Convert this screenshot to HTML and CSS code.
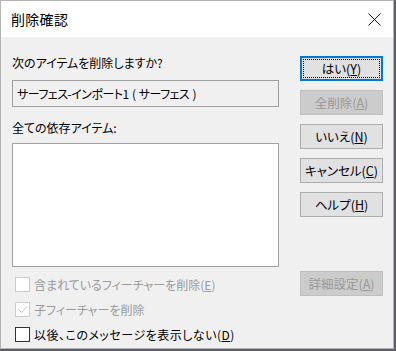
FILE: index.html
```html
<!DOCTYPE html>
<html lang="ja">
<head>
    <meta charset="UTF-8">
    <title>削除確認</title>
    <link rel="stylesheet" href="styles.css">
</head>
<body>
<div class="window">
    <div class="titlebar">
        <span class="title">削除確認</span>
        <svg class="close" width="13" height="13" viewBox="0 0 13 13">
            <path d="M0.5 0.5 L12.5 12.5 M12.5 0.5 L0.5 12.5" />
        </svg>
    </div>
    <div class="content">
        <div class="left">
            <div class="prompt">次のアイテムを削除しますか?</div>
            <div class="field">サーフェス-インポート1 ( サーフェス )</div>
            <div class="deps-label">全ての依存アイテム:</div>
            <div class="list"></div>
        </div>
        <div class="buttons">
            <button class="btn default">はい(<u>Y</u>)</button>
            <button class="btn" disabled>全削除(<u>A</u>)</button>
            <button class="btn">いいえ(<u>N</u>)</button>
            <button class="btn">キャンセル(<u>C</u>)</button>
            <button class="btn">ヘルプ(<u>H</u>)</button>
        </div>

        <label class="check disabled">
            <span class="box"></span>
            <span class="text">含まれているフィーチャーを削除(<u>E</u>)</span>
        </label>
        <div class="adv-cell">
            <button class="btn" disabled>詳細設定(<u>A</u>)</button>
        </div>

        <label class="check disabled">
            <span class="box">
                <svg width="13" height="13" viewBox="0 0 13 13">
                    <polyline points="2.5,6.5 5.5,9.5 11,3.5" />
                </svg>
            </span>
            <span class="text">子フィーチャーを削除</span>
        </label>
        <div></div>

        <label class="check">
            <span class="box"></span>
            <span class="text wide">以後、このメッセージを表示しない(<u>D</u>)</span>
        </label>
        <div></div>
    </div>
</div>
</body>
</html>
```

FILE: styles.css
```css
body {
    margin: 0;
    background: #5c5e6b;
    font-family: "Noto Sans CJK JP", sans-serif;
    font-size: 12px;
    font-feature-settings: "palt";
    color: #000;
}

.window {
    width: 392px;
    height: 347px;
    border: 1px solid #b4b4b4;
    background: #f0f0f0;
    display: flex;
    flex-direction: column;
}

.titlebar {
    height: 36px;
    background: #fff;
    display: flex;
    align-items: center;
    justify-content: space-between;
    padding: 0 12px 0 10px;
}

.title {
    font-size: 14px;
    line-height: 18px;
    letter-spacing: 0.3px;
}

.close path {
    stroke: #111;
    stroke-width: 1;
    fill: none;
}

.content {
    display: grid;
    grid-template-columns: 267px 83px;
    column-gap: 21px;
    padding: 18px 0 0 11px;
    align-items: start;
}

.left {
    display: flex;
    flex-direction: column;
}

.prompt,
.deps-label {
    line-height: 16px;
}

.field {
    margin-top: 9px;
    height: 27px;
    box-sizing: border-box;
    border: 1px solid #a0a0a0;
    padding-left: 4px;
    line-height: 25px;
    letter-spacing: -0.5px;
    word-spacing: 1px;
}

.deps-label {
    margin-top: 13px;
}

.list {
    margin-top: 7px;
    height: 124px;
    box-sizing: border-box;
    border: 1px solid #a0a0a0;
    background: #fff;
}

.buttons {
    margin-top: 1px;
    display: flex;
    flex-direction: column;
    gap: 9px;
}

.btn {
    width: 83px;
    height: 25px;
    box-sizing: border-box;
    border: 1px solid #adadad;
    background: #e1e1e1;
    font-family: inherit;
    font-size: 12.5px;
    font-feature-settings: "palt";
    color: #000;
    padding: 0;
    line-height: 16px;
}

.btn.default {
    border-color: #0078d7;
    box-shadow: inset 0 0 0 1px #0078d7;
    outline: 1px dotted #000;
    outline-offset: -4px;
}

.btn:disabled {
    background: #cccccc;
    border-color: #bfbfbf;
    color: #999;
}

.check {
    height: 25px;
    display: flex;
    align-items: center;
    gap: 4px;
    margin-top: 4px;
    padding-top: 2px;
    box-sizing: border-box;
}

.adv-cell {
    margin-top: 4px;
}

.check ~ .check {
    margin-top: 0;
}

.check .box {
    flex: none;
    width: 15px;
    height: 15px;
    box-sizing: border-box;
    margin-left: 3px;
    border: 1px solid #333;
    background: #fff;
    display: flex;
    align-items: center;
    justify-content: center;
}

.check .text {
    line-height: 16px;
    white-space: nowrap;
}

.check .text.wide {
    letter-spacing: 0.5px;
}

.check.disabled .box {
    border-color: #cccccc;
}

.check.disabled .text {
    color: #9a9a9a;
}

.check polyline {
    fill: none;
    stroke: #c4c4c4;
    stroke-width: 1;
}
```
